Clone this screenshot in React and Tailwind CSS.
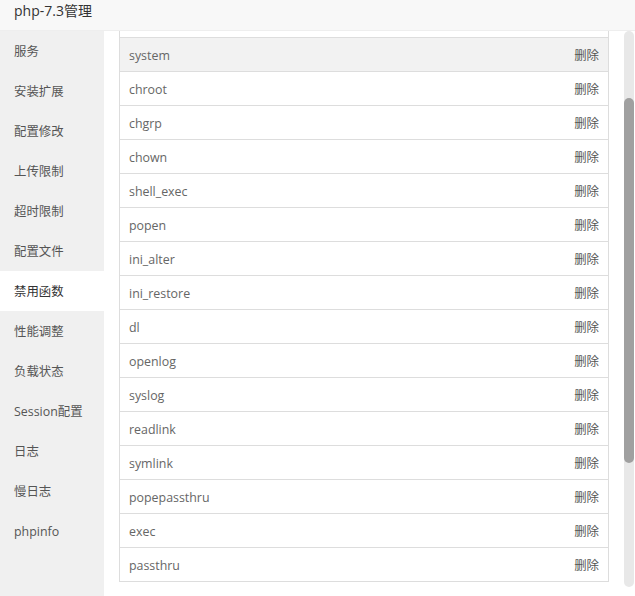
const menu = ["服务", "安装扩展", "配置修改", "上传限制", "超时限制", "配置文件", "禁用函数", "性能调整", "负载状态", "Session配置", "日志", "慢日志", "phpinfo"];

const funcs = ["system", "chroot", "chgrp", "chown", "shell_exec", "popen", "ini_alter", "ini_restore", "dl", "openlog", "syslog", "readlink", "symlink", "popepassthru", "exec", "passthru"];

export default function App() {
  return (
    <div className="w-[635px] h-[596px] flex flex-col bg-white overflow-hidden text-[12.4px]" style={{ fontFamily: '"Open Sans","Noto Sans CJK SC",sans-serif' }}>
      <div className="h-[31px] shrink-0 bg-[#f8f8f8] border-b border-[#eee] pl-[14px] text-[14px] text-[#333]">php-7.3管理</div>
      <div className="flex flex-1 min-h-0">
        <div className="w-[104px] shrink-0 bg-[#f0f0f0] flex flex-col">
          {menu.map((m) => (
            <div key={m} className={"h-10 shrink-0 flex items-center pl-[14px] pt-[3px] " + (m == "禁用函数" ? "bg-white text-[#333]" : "text-[#555]")}>{m}</div>
          ))}
        </div>
        <div className="flex-1 overflow-hidden pl-[15px] pr-[13px]">
          <div className="-mt-[28px] border border-[#ddd] border-t-0">
            <Row name="" />
            {funcs.map((f, i) => <Row key={f} name={f} action="删除" hover={i == 0} />)}
          </div>
        </div>
        <div className="w-[13px] shrink-0 flex flex-col pl-[2px] pr-[1px]">
          <div className="w-[10px] h-[556px] rounded-full bg-[#e8e8e8] flex flex-col pt-[67px]">
            <div className="h-[365px] rounded-full bg-[#a0a0a0]"></div>
          </div>
        </div>
      </div>
    </div>
  );
}

const Row = ({ name, action, hover }) => (
  <div className={"h-[34px] flex items-center justify-between pl-[9px] pr-[9px] pt-[3px] border-t border-[#ddd] " + (hover ? "bg-[#f2f2f2]" : "bg-white")}>
    <span className="text-[#666]">{name}</span>
    <span className="text-[#555]">{action}</span>
  </div>
);
